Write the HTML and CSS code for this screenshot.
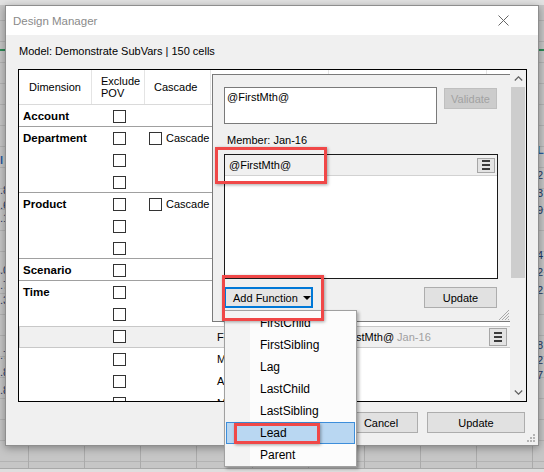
FILE: index.html
```html
<!DOCTYPE html>
<html>
<head>
<meta charset="utf-8">
<title>Design Manager</title>
<link rel="stylesheet" href="styles.css">
</head>
<body>
<div class="sheet">
  <span class="frag bold" style="left:0;top:153px">l</span>
  <span class="frag" style="left:0;top:183px">.8</span>
  <span class="frag" style="left:0;top:198px">.6</span>
  <span class="frag" style="left:0;top:211px">.1</span>
  <span class="frag" style="left:0;top:263px">.0</span>
  <span class="frag" style="left:0;top:278px">.7</span>
  <span class="frag" style="left:0;top:293px">.3</span>
  <span class="frag" style="left:0;top:348px">.7</span>
  <span class="frag" style="left:0;top:365px">.8</span>
  <span class="frag" style="left:0;top:383px">.8</span>
  <span class="frag bold" style="left:537px;top:143px">L</span>
  <span class="frag" style="left:537px;top:168px">2</span>
  <span class="frag" style="left:537px;top:186px">3</span>
  <span class="frag" style="left:537px;top:203px">9</span>
  <span class="frag" style="left:537px;top:248px">4</span>
  <span class="frag" style="left:537px;top:265px">2</span>
  <span class="frag" style="left:537px;top:283px">2</span>
  <span class="frag" style="left:537px;top:338px">8</span>
  <span class="frag" style="left:537px;top:353px">2</span>
  <span class="frag" style="left:537px;top:368px">7</span>
</div>

<div class="dialog">
  <div class="titlebar">
    <span class="title">Design Manager</span>
    <svg class="close" width="11" height="11" viewBox="0 0 11 11"><path d="M0.5 0.5 L10.5 10.5 M10.5 0.5 L0.5 10.5" stroke="#666" stroke-width="1" fill="none"/></svg>
  </div>
  <div class="body">
    <div class="model">Model: Demonstrate SubVars | 150 cells</div>
    <div class="mainbox">
      <div class="table">
        <div class="row head">
          <div class="c h-dim">Dimension</div>
          <div class="c h-exc">Exclude<br>POV</div>
          <div class="c h-cas">Cascade</div>
          <div class="c h-lab"></div>
          <div class="c h-val"></div>
          <div class="c"></div>
        </div>

        <div class="group">
          <div class="row"><div class="c dim">Account</div><div class="c exc"><span class="cb"></span></div><div class="c"></div><div class="c"></div><div class="c"></div><div class="c"></div></div>
        </div>

        <div class="group">
          <div class="row"><div class="c dim">Department</div><div class="c exc"><span class="cb"></span></div><div class="c cas"><span class="cb"></span><span class="cas-label">Cascade</span></div><div class="c"></div><div class="c"></div><div class="c"></div></div>
          <div class="row"><div class="c"></div><div class="c exc"><span class="cb"></span></div><div class="c"></div><div class="c"></div><div class="c"></div><div class="c"></div></div>
          <div class="row"><div class="c"></div><div class="c exc"><span class="cb"></span></div><div class="c"></div><div class="c"></div><div class="c"></div><div class="c"></div></div>
        </div>

        <div class="group">
          <div class="row"><div class="c dim">Product</div><div class="c exc"><span class="cb"></span></div><div class="c cas"><span class="cb"></span><span class="cas-label">Cascade</span></div><div class="c"></div><div class="c"></div><div class="c"></div></div>
          <div class="row"><div class="c"></div><div class="c exc"><span class="cb"></span></div><div class="c"></div><div class="c"></div><div class="c"></div><div class="c"></div></div>
          <div class="row"><div class="c"></div><div class="c exc"><span class="cb"></span></div><div class="c"></div><div class="c"></div><div class="c"></div><div class="c"></div></div>
        </div>

        <div class="group">
          <div class="row"><div class="c dim">Scenario</div><div class="c exc"><span class="cb"></span></div><div class="c"></div><div class="c"></div><div class="c"></div><div class="c"></div></div>
        </div>

        <div class="group last">
          <div class="row"><div class="c dim">Time</div><div class="c exc"><span class="cb"></span></div><div class="c"></div><div class="c"></div><div class="c"></div><div class="c"></div></div>
          <div class="row"><div class="c"></div><div class="c exc"><span class="cb"></span></div><div class="c"></div><div class="c"></div><div class="c"></div><div class="c"></div></div>
          <div class="row band"><div class="c"></div><div class="c exc"><span class="cb"></span></div><div class="c"></div><div class="c lab">Formula</div><div class="c val">@FirstMth@ <span class="muted">Jan-16</span></div><div class="c btncell"><span class="ham tall"><i></i><i></i><i></i></span></div></div>
          <div class="row"><div class="c"></div><div class="c exc"><span class="cb"></span></div><div class="c"></div><div class="c lab">Member</div><div class="c"></div><div class="c"></div></div>
          <div class="row"><div class="c"></div><div class="c exc"><span class="cb"></span></div><div class="c"></div><div class="c lab">Alias</div><div class="c"></div><div class="c"></div></div>
          <div class="row"><div class="c"></div><div class="c exc"><span class="cb"></span></div><div class="c"></div><div class="c lab">Member</div><div class="c"></div><div class="c"></div></div>
        </div>

        <div class="panel">
          <div class="edit-row">
            <div class="textbox">@FirstMth@</div>
            <div class="validate">Validate</div>
          </div>
          <div class="member-label">Member: Jan-16</div>
          <div class="listbox">
            <div class="list-item"><span>@FirstMth@</span><span class="ham"><i></i><i></i><i></i></span></div>
          </div>
          <div class="panel-buttons">
            <div class="addfn">Add Function<span class="caret"></span></div>
            <div class="btn small">Update</div>
          </div>
          <svg class="grip" width="12" height="12" viewBox="0 0 12 12"><path d="M11 1 L1 11 M11 4 L4 11 M11 7 L7 11 M11 10 L10 11" stroke="#a8a8a8" stroke-width="1" fill="none"/></svg>
        </div>
      </div>
      <div class="vscroll">
        <div class="arrow"><svg width="9" height="5" viewBox="0 0 9 5"><path d="M0.8 4.5 L4.5 0.8 L8.2 4.5" stroke="#606060" stroke-width="1.2" fill="none"/></svg></div>
        <div class="thumb"></div>
        <div class="track"></div>
        <div class="arrow"><svg width="9" height="5" viewBox="0 0 9 5"><path d="M0.8 0.5 L4.5 4.2 L8.2 0.5" stroke="#606060" stroke-width="1.2" fill="none"/></svg></div>
      </div>
    </div>
    <div class="footer">
      <div class="btn cancel">Cancel</div>
      <div class="btn update">Update</div>
    </div>
  </div>
  <svg class="dgrip" width="8" height="8" viewBox="0 0 8 8"><g fill="#b4b4b4"><rect x="6" y="0" width="2" height="2"/><rect x="3" y="3" width="2" height="2"/><rect x="6" y="3" width="2" height="2"/><rect x="0" y="6" width="2" height="2"/><rect x="3" y="6" width="2" height="2"/><rect x="6" y="6" width="2" height="2"/></g></svg>
</div>

<div class="menu">
  <div class="item">FirstChild</div>
  <div class="item">FirstSibling</div>
  <div class="item">Lag</div>
  <div class="item">LastChild</div>
  <div class="item">LastSibling</div>
  <div class="item active">Lead</div>
  <div class="item">Parent</div>
</div>

<div class="mark m1"></div>
<div class="mark m2"></div>
<div class="mark m3"></div>
</body>
</html>
```

FILE: styles.css
```css
* { box-sizing: border-box; }
html, body { margin: 0; padding: 0; }
body {
  width: 544px;
  height: 472px;
  overflow: hidden;
  position: relative;
  font-family: "Liberation Sans", Arial, sans-serif;
  font-size: 11px;
  color: #000;
  background: #c6c6c6;
}

/* background spreadsheet */
.sheet {
  position: absolute;
  inset: 0;
  background:
    linear-gradient(#e2e2e2 0 5px, transparent 5px),
    linear-gradient(to top, #dedede 0 3px, #a8a8a8 3px 4px, transparent 4px),
    linear-gradient(transparent 0 49px, #2e8b57 49px 51px, transparent 51px),
    repeating-linear-gradient(to right, transparent 0 28px, #aaaaaa 28px 29px, transparent 29px 56px),
    repeating-linear-gradient(to bottom, transparent 0 20px, #b3b3b3 20px 21px),
    #c6c6c6;
}
.frag {
  position: absolute;
  font-size: 11px;
  line-height: 14px;
  color: #1f3a68;
}
.frag.bold { font-weight: bold; color: #2a5aa0; }

/* dialog */
.dialog {
  position: absolute;
  left: 5px;
  top: 5px;
  width: 534px;
  height: 441px;
  background: #f0f0f0;
  border: 1px solid #8e8e8e;
  box-shadow: 0 2px 8px rgba(0, 0, 0, 0.35);
  display: flex;
  flex-direction: column;
}
.titlebar {
  height: 29px;
  background: #fff;
  display: flex;
  align-items: center;
  justify-content: space-between;
  padding: 0 29px 0 7px;
}
.title {
  font-size: 11.5px;
  color: #8a8a8a;
}
.close { display: block; }

.body {
  flex: 1;
  padding: 10px 11px 0 12px;
  display: flex;
  flex-direction: column;
}
.model {
  line-height: 13px;
  padding-left: 1px;
}
.mainbox {
  margin-top: 11px;
  height: 333px;
  border: 1px solid #000;
  background: #fff;
  display: flex;
}
.table {
  flex: 1;
  position: relative;
  overflow: hidden;
}
.row {
  display: grid;
  grid-template-columns: 73px 53px 66px 118px 158px 23px;
  height: 22px;
}
.row.head {
  height: 35px;
  border-bottom: 1px solid #dadada;
}
.head .c {
  border-right: 1px solid #e4e4e4;
  display: flex;
  align-items: center;
  line-height: 12px;
  padding-left: 9px;
}
.head .c:last-child { border-right: 0; }
.head .h-dim { padding-left: 10px; }

.group { border-bottom: 1px solid #a0a0a0; }
.group .row:last-child { height: 21px; }
.group.last { border-bottom: 0; }
.group.last .row:last-child { height: 22px; }

.c { min-width: 0; white-space: nowrap; }
.dim {
  padding-left: 4px;
  font-weight: bold;
  font-size: 11.5px;
  line-height: 22px;
}
.exc { padding-left: 21px; }
.cb {
  display: block;
  width: 13px;
  height: 13px;
  border: 1px solid #333;
  background: #fff;
  margin-top: 5px;
}
.cas {
  display: flex;
  padding-left: 4px;
}
.cas-label {
  margin-left: 4px;
  line-height: 22px;
}
.lab { padding-left: 6px; line-height: 22px; }
.val { padding-left: 2px; line-height: 20px; }
.muted { color: #a0a0a0; }

.row.band {
  background: #f0f0f0;
  border-top: 1px solid #c8c8c8;
  border-bottom: 1px solid #c8c8c8;
  border-left: 1px solid #c8c8c8;
  margin-top: 1px;
}
.band .cb { margin-top: 3px; margin-left: -1px; }
.band .lab { line-height: 20px; padding-left: 5px; }
.btncell { padding-left: 1px; }

.ham {
  width: 18px;
  height: 15px;
  border: 1px solid #a6a6a6;
  background: #e3e3e3;
  display: flex;
  flex-direction: column;
  align-items: center;
  justify-content: center;
  gap: 2px;
}
.ham.tall { height: 18px; margin-top: 1px; }
.ham i {
  display: block;
  width: 8px;
  height: 2px;
  background: #3a3a3a;
}

/* overlay panel */
.panel {
  position: absolute;
  left: 193px;
  top: 4px;
  width: 299px;
  height: 248px;
  background: #f0f0f0;
  border: 1px solid #7a7a7a;
  padding: 12px 0 0 11px;
  display: flex;
  flex-direction: column;
}
.edit-row {
  display: flex;
  align-items: flex-start;
  gap: 7px;
}
.textbox {
  width: 213px;
  height: 37px;
  background: #fff;
  border: 1px solid #7a7a7a;
  padding: 3px 0 0 2px;
  line-height: 13px;
}
.validate {
  width: 53px;
  height: 21px;
  margin-top: 1px;
  background: #cccccc;
  border: 1px solid #bfbfbf;
  color: #a2a2a2;
  display: flex;
  align-items: center;
  justify-content: center;
}
.member-label {
  margin-top: 10px;
  line-height: 13px;
  padding-left: 3px;
}
.listbox {
  margin-top: 7px;
  width: 274px;
  height: 125px;
  border: 1px solid #1a1a1a;
  background: #fff;
}
.list-item {
  height: 21px;
  background: #f0f0f0;
  border-bottom: 1px solid #d2d2d2;
  display: flex;
  align-items: center;
  justify-content: space-between;
  padding: 0 2px 0 4px;
}
.panel-buttons {
  margin-top: 8px;
  width: 273px;
  display: flex;
  justify-content: space-between;
}
.addfn {
  width: 89px;
  height: 21px;
  border: 2px solid #0078d7;
  background: #e5e5e5;
  display: flex;
  align-items: center;
  padding-left: 7px;
}
.caret {
  width: 0;
  height: 0;
  border-left: 4px solid transparent;
  border-right: 4px solid transparent;
  border-top: 4px solid #000;
  margin-left: 5px;
  margin-top: 1px;
}
.btn {
  height: 21px;
  background: #e1e1e1;
  border: 1px solid #adadad;
  display: flex;
  align-items: center;
  justify-content: center;
}
.btn.small { width: 73px; }
.grip {
  position: absolute;
  right: 0;
  bottom: 0;
}

/* scrollbar */
.vscroll {
  width: 16px;
  background: #f0f0f0;
  display: flex;
  flex-direction: column;
}
.arrow {
  height: 17px;
  display: flex;
  align-items: center;
  justify-content: center;
}
.arrow svg { display: block; }
.thumb {
  height: 191px;
  margin: 0 1px;
  background: #cdcdcd;
}
.track { flex: 1; }

/* footer */
.footer {
  margin-top: 10px;
  margin-right: 2px;
  display: flex;
  justify-content: flex-end;
  gap: 9px;
}
.cancel { width: 74px; }
.update { width: 98px; }
.dgrip {
  position: absolute;
  right: 3px;
  bottom: 3px;
}

/* context menu */
.menu {
  position: absolute;
  left: 224px;
  top: 310px;
  width: 133px;
  height: 157px;
  border: 1px solid #a0a0a0;
  background: linear-gradient(to right, #f3f3f3 0 25px, #fcfcfc 25px);
  box-shadow: 2px 2px 3px rgba(0, 0, 0, 0.3);
  padding: 1px;
  font-size: 12px;
}
.item {
  height: 22px;
  line-height: 22px;
  padding-left: 34px;
}
.item.active {
  background: #b9d7f2;
  border: 1px solid #3d8edb;
  line-height: 20px;
  padding-left: 33px;
}

/* annotation rectangles */
.mark {
  position: absolute;
  border: 3px solid #f04848;
  box-shadow: 1px 1px 3px rgba(0, 0, 0, 0.35);
}
.m1 { left: 215px; top: 147px; width: 112px; height: 37px; }
.m2 { left: 222px; top: 275px; width: 102px; height: 46px; }
.m3 { left: 234px; top: 423px; width: 86px; height: 21px; }
```
